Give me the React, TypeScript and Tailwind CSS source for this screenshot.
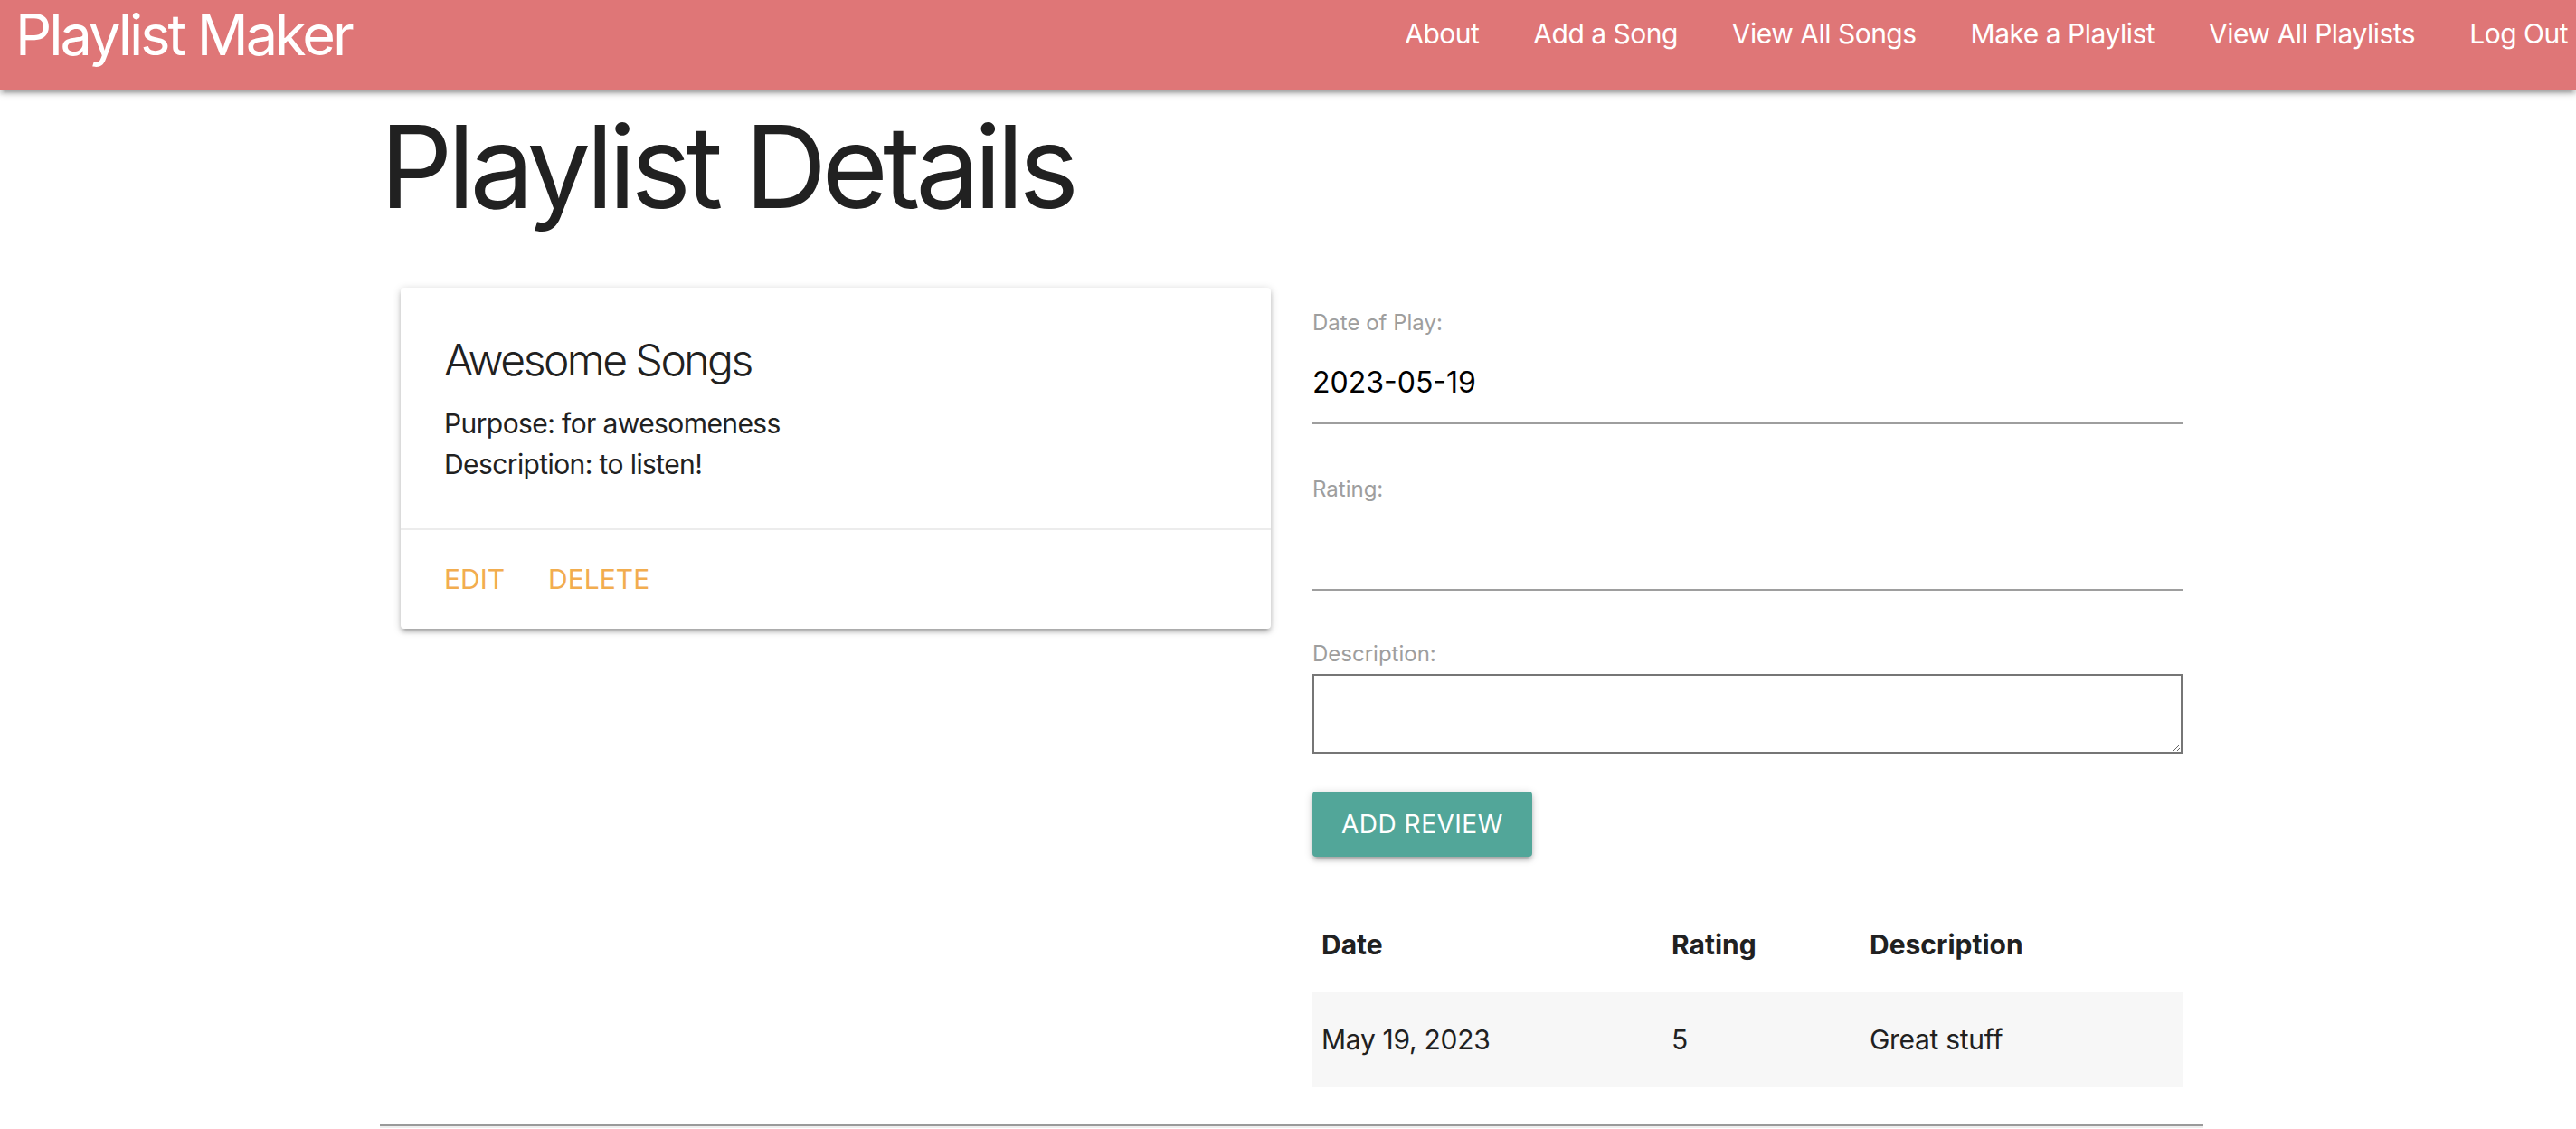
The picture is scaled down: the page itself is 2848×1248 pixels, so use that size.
import React from "react";

const navLinks = [
  { id: "1", title: "About" },
  { id: "2", title: "Add a Song" },
  { id: "3", title: "View All Songs" },
  { id: "4", title: "Make a Playlist" },
  { id: "5", title: "View All Playlists" },
  { id: "6", title: "Log Out" },
];

const Field = ({ label, value = "", className = "" }) => {
  return (
    <div className={className}>
      <label className="block text-[24px] leading-[36px] text-[#9e9e9e]">
        {label}
      </label>
      <div className="mt-[24px] h-[70px] border-b-2 border-[#9e9e9e] text-[32px] leading-[48px] text-black">
        {value}
      </div>
    </div>
  );
};

const App = () => {
  return (
    <div className="min-h-screen bg-white font-[Inter,sans-serif] text-[#212121]">
      <nav className="flex h-[100px] items-start justify-between bg-[#df7677] shadow-[0_4px_4px_0_rgba(0,0,0,0.14),0_6px_2px_-4px_rgba(0,0,0,0.12),0_2px_10px_0_rgba(0,0,0,0.2)]">
        <a href="#" className="pl-[17px] text-[63px] leading-[76px] tracking-[-3px] text-white">
          Playlist Maker
        </a>
        <ul className="flex gap-[60px] pr-[9px]">
          {navLinks.map(({ id, title }) => (
            <li key={id}>
              <a href="#" className="block text-[30px] leading-[74px] tracking-[-0.5px] text-white">
                {title}
              </a>
            </li>
          ))}
        </ul>
      </nav>

      <main className="ml-[420px] w-[2016px]">
        <h1 className="mt-[15px] text-[126px] leading-[138px] tracking-[-5.8px]">
          Playlist Details
        </h1>

        <div className="mt-[65px] flex items-start">
          <div className="w-[1008px] px-[23px]">
            <div className="rounded-[4px] bg-white shadow-[0_4px_4px_0_rgba(0,0,0,0.14),0_6px_2px_-4px_rgba(0,0,0,0.12),0_2px_10px_0_rgba(0,0,0,0.2)]">
              <div className="p-[48px]">
                <div className="mb-[16px] text-[48px] font-light leading-[64px] tracking-[-2.5px]">
                  Awesome Songs
                </div>
                <p className="text-[30px] leading-[45px] tracking-[-0.6px]">
                  Purpose: for awesomeness
                </p>
                <p className="text-[30px] leading-[45px] tracking-[-0.6px]">
                  Description: to listen!
                </p>
              </div>
              <div className="flex gap-[48px] border-t-2 border-[#ececec] px-[48px] py-[32px]">
                <a href="#" className="text-[30px] uppercase leading-[45px] text-[#f2ad4f]">
                  Edit
                </a>
                <a href="#" className="text-[30px] uppercase leading-[45px] text-[#f2ad4f]">
                  Delete
                </a>
              </div>
            </div>
          </div>

          <div className="w-[1008px] px-[23px]">
            <form>
              <Field className="pt-[21px]" label="Date of Play:" value="2023-05-19" />
              <Field className="mt-[54px]" label="Rating:" />
              <div className="mt-[52px]">
                <label className="block text-[24px] leading-[36px] text-[#9e9e9e]">
                  Description:
                </label>
                <textarea
                  readOnly
                  className="mt-[4px] block h-[88px] w-full border-2 border-[#767676] bg-white"
                />
              </div>
              <button
                type="button"
                className="mt-[42px] h-[72px] rounded-[4px] bg-[#52a699] px-[32px] text-[28px] uppercase tracking-[0.5px] text-white shadow-[0_4px_4px_0_rgba(0,0,0,0.14),0_6px_2px_-4px_rgba(0,0,0,0.12),0_2px_10px_0_rgba(0,0,0,0.2)]"
              >
                Add Review
              </button>
            </form>

            <table className="mt-[45px] w-full border-collapse text-left text-[30px] leading-[45px]">
              <thead>
                <tr>
                  <th className="w-[387px] px-[10px] py-[30px] font-bold">Date</th>
                  <th className="w-[219px] px-[10px] py-[30px] font-bold">Rating</th>
                  <th className="px-[10px] py-[30px] font-bold">Description</th>
                </tr>
              </thead>
              <tbody>
                <tr className="bg-[#f7f7f7]">
                  <td className="px-[10px] py-[30px] tracking-[-0.3px]">May 19, 2023</td>
                  <td className="px-[10px] py-[30px]">5</td>
                  <td className="px-[10px] py-[30px] tracking-[-0.3px]">Great stuff</td>
                </tr>
              </tbody>
            </table>
          </div>
        </div>

        <hr className="mt-[41px] border-t-2 border-b-2 border-t-[#9a9a9a] border-b-[#eeeeee]" />
      </main>
    </div>
  );
};

export default App;
